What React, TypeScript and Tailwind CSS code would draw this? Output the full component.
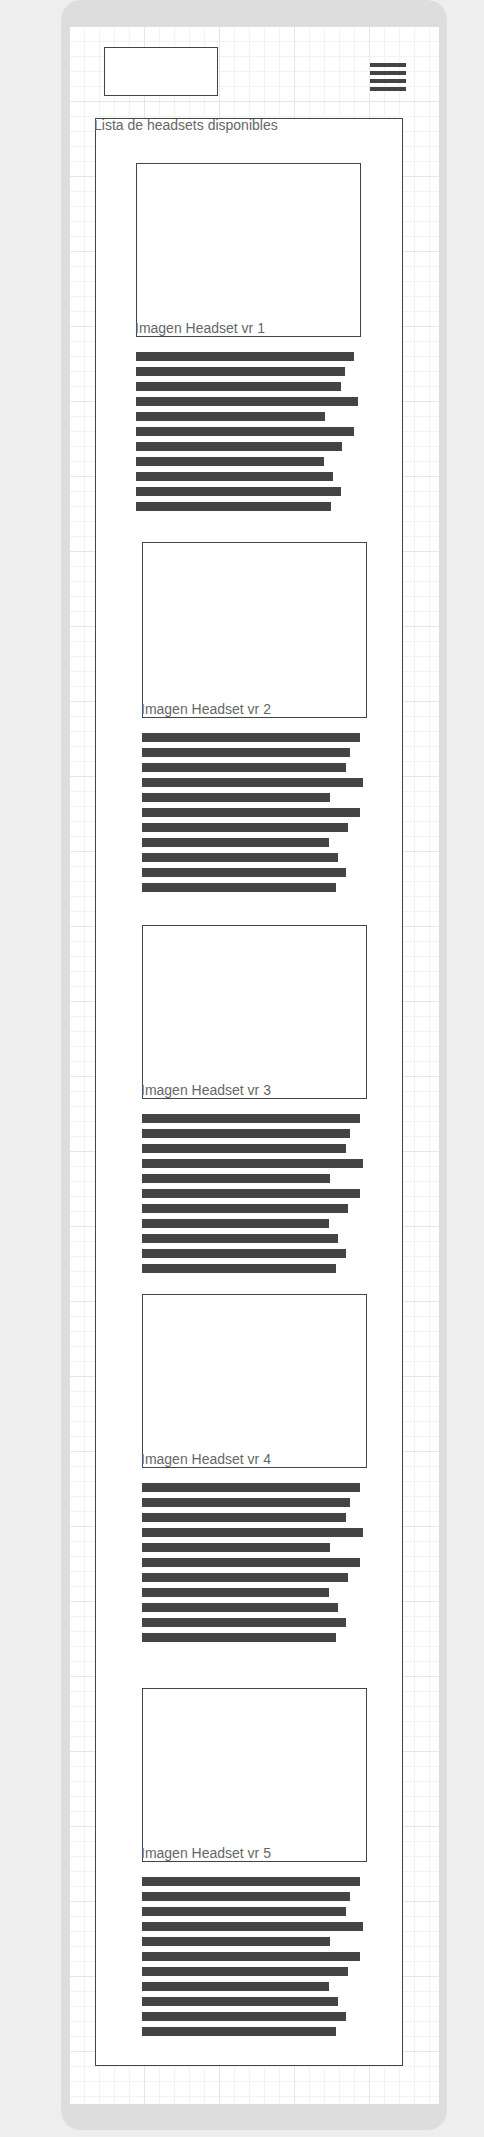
import React from 'react';

interface Headset {
  id: number;
  label: string;
  indent: string;
  gap: string;
  boxHeight: string;
  lines: number[];
}

const baseLines = [218, 208, 204, 221, 188, 218, 206, 187, 196, 204, 194];

const headsets: Headset[] = [
  { id: 1, label: 'Imagen Headset vr 1', indent: 'ml-[40px]', gap: 'mt-[30px]', boxHeight: 'h-[174px]', lines: [218, 209, 205, 222, 189, 218, 206, 188, 197, 205, 195] },
  { id: 2, label: 'Imagen Headset vr 2', indent: 'ml-[46px]', gap: 'mt-[31px]', boxHeight: 'h-[176px]', lines: baseLines },
  { id: 3, label: 'Imagen Headset vr 3', indent: 'ml-[46px]', gap: 'mt-[33px]', boxHeight: 'h-[174px]', lines: baseLines },
  { id: 4, label: 'Imagen Headset vr 4', indent: 'ml-[46px]', gap: 'mt-[21px]', boxHeight: 'h-[174px]', lines: baseLines },
  { id: 5, label: 'Imagen Headset vr 5', indent: 'ml-[46px]', gap: 'mt-[46px]', boxHeight: 'h-[174px]', lines: baseLines },
];

const HeadsetCard: React.FC<{ item: Headset }> = ({ item }) => {
  return (
    <div className={`flex flex-col ${item.indent} ${item.gap}`}>
      {/* Image placeholder */}
      <div className={`w-[225px] ${item.boxHeight} border border-[#444444] bg-white flex flex-col justify-end`}>
        <span className="-ml-[2px] leading-4 text-[14px] text-[#666666] whitespace-nowrap">{item.label}</span>
      </div>

      {/* Description lines */}
      <div className="mt-[15px] flex flex-col gap-[6px]">
        {item.lines.map((w, i) => (
          <div key={i} className="h-[9px] bg-[#444444]" style={{ width: w }} />
        ))}
      </div>
    </div>
  );
};

export default function App() {
  return (
    <div className="min-h-[2137px] bg-[#eeeeee] pb-[7px] font-['Liberation_Sans',Arial,sans-serif]">
      {/* Phone frame */}
      <div className="ml-[61px] w-[386px] rounded-[20px] bg-[#dddddd] pt-[27px] pb-[26px] pl-[9px] pr-[8px]">
        {/* Screen */}
        <div className="flex flex-col bg-white pb-[38px] [background-image:linear-gradient(to_right,#e6e6e6_1px,transparent_1px),linear-gradient(to_bottom,#e6e6e6_1px,transparent_1px),linear-gradient(to_right,#f2f2f2_1px,transparent_1px),linear-gradient(to_bottom,#f2f2f2_1px,transparent_1px)] [background-size:75px_75px,75px_75px,15px_15px,15px_15px] [background-position:-1px_-1px]">
          {/* Header */}
          <div className="flex items-start">
            <div className="ml-[34px] mt-[20px] w-[114px] h-[49px] border border-[#444444] bg-white" />
            <div className="ml-auto mr-[33px] mt-[36px] flex flex-col gap-[4px]">
              <div className="w-[36px] h-[4px] bg-[#444444]" />
              <div className="w-[36px] h-[4px] bg-[#444444]" />
              <div className="w-[36px] h-[4px] bg-[#444444]" />
              <div className="w-[36px] h-[4px] bg-[#444444]" />
            </div>
          </div>

          {/* Headset list */}
          <div className="ml-[25px] mt-[22px] w-[308px] border border-[#444444] bg-white pb-[29px] flex flex-col">
            <h2 className="-mt-[2px] -ml-[2px] leading-4 text-[14px] font-normal text-[#666666] whitespace-nowrap">
              Lista de headsets disponibles
            </h2>
            {headsets.map((h) => (
              <HeadsetCard key={h.id} item={h} />
            ))}
          </div>
        </div>
      </div>
    </div>
  );
}
